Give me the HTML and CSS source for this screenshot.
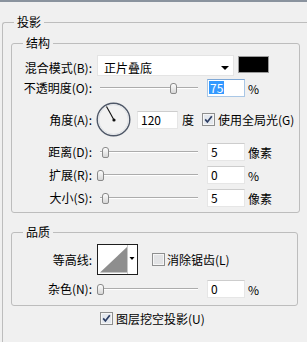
FILE: index.html
```html
<!DOCTYPE html>
<html lang="zh-CN">
<head>
    <meta charset="UTF-8">
    <title>投影</title>
    <link rel="stylesheet" href="styles.css">
</head>
<body>
    <fieldset class="group outer">
        <legend>投影</legend>

        <!-- 结构 -->
        <fieldset class="group struct">
            <legend>结构</legend>
            <div class="rows">
                <div class="row row-blend">
                    <span class="lbl">混合模式(B):</span>
                    <div class="select">正片叠底<span class="arrow"></span></div>
                    <div class="swatch"></div>
                </div>
                <div class="row row-opacity">
                    <span class="lbl">不透明度(O):</span>
                    <div class="slider"><div class="thumb" style="left: 73px;"></div></div>
                    <div class="field focus"><span class="sel">75</span></div>
                    <span class="unit">%</span>
                </div>
                <div class="row row-angle">
                    <span class="lbl">角度(A):</span>
                    <svg class="dial" width="35" height="35" viewBox="0 0 35 35">
                        <circle cx="17.5" cy="17.5" r="16.3" fill="#f2f2f2" stroke="#4f5868" stroke-width="1.4"/>
                        <circle cx="17.5" cy="17.5" r="14.8" fill="none" stroke="#dfe2e6" stroke-width="1"/>
                        <line x1="18" y1="18" x2="10.5" y2="4.5" stroke="#111" stroke-width="1.1"/>
                        <circle cx="18" cy="18" r="1.6" fill="#111"/>
                    </svg>
                    <div class="field wide">120</div>
                    <span class="deg">度</span>
                    <svg class="cb" width="13" height="13" viewBox="0 0 13 13">
                        <rect x="0.5" y="0.5" width="12" height="12" fill="#f6f6f6" stroke="#8e8f8f"/>
                        <rect x="2" y="2" width="9" height="9" fill="#e4e8ee"/>
                        <path d="M3.2 6.4 L5.4 9 L9.8 3.2" fill="none" stroke="#2c3d63" stroke-width="1.7"/>
                    </svg>
                    <span class="cb-text">使用全局光(G)</span>
                </div>
                <div class="row row-dist">
                    <span class="lbl">距离(D):</span>
                    <div class="slider"><div class="thumb" style="left: 5px;"></div></div>
                    <div class="field">5</div>
                    <span class="unit">像素</span>
                </div>
                <div class="row">
                    <span class="lbl">扩展(R):</span>
                    <div class="slider"><div class="thumb" style="left: 0px;"></div></div>
                    <div class="field">0</div>
                    <span class="unit">%</span>
                </div>
                <div class="row">
                    <span class="lbl">大小(S):</span>
                    <div class="slider"><div class="thumb" style="left: 5px;"></div></div>
                    <div class="field">5</div>
                    <span class="unit">像素</span>
                </div>
            </div>
        </fieldset>

        <!-- 品质 -->
        <fieldset class="group quality">
            <legend>品质</legend>
            <div class="rows">
                <div class="row row-contour">
                    <span class="lbl">等高线:</span>
                    <svg class="contour" width="41" height="31" viewBox="0 0 41 31">
                        <rect x="0.5" y="0.5" width="40" height="30" fill="#fff" stroke="#1e1e1e"/>
                        <polygon points="3,28.5 30,3 30,28.5" fill="#8e8e8e"/>
                        <line x1="30.5" y1="1" x2="30.5" y2="30" stroke="#c8c8c8"/>
                        <polygon points="32.5,13 37.5,13 35,16" fill="#000"/>
                    </svg>
                    <svg class="cb" width="13" height="13" viewBox="0 0 13 13">
                        <rect x="0.5" y="0.5" width="12" height="12" fill="#f6f6f6" stroke="#8e8f8f"/>
                        <rect x="2" y="2" width="9" height="9" fill="#e2e3e5"/>
                    </svg>
                    <span class="cb-text">消除锯齿(L)</span>
                </div>
                <div class="row">
                    <span class="lbl">杂色(N):</span>
                    <div class="slider"><div class="thumb" style="left: 0px;"></div></div>
                    <div class="field">0</div>
                    <span class="unit">%</span>
                </div>
            </div>
        </fieldset>

        <div class="knockout">
            <svg class="cb" width="13" height="13" viewBox="0 0 13 13">
                <rect x="0.5" y="0.5" width="12" height="12" fill="#f6f6f6" stroke="#8e8f8f"/>
                <rect x="2" y="2" width="9" height="9" fill="#e4e8ee"/>
                <path d="M3.2 6.4 L5.4 9 L9.8 3.2" fill="none" stroke="#2c3d63" stroke-width="1.7"/>
            </svg>
            <span class="cb-text">图层挖空投影(U)</span>
        </div>
    </fieldset>
</body>
</html>
```

FILE: styles.css
```css
html, body {
    margin: 0;
    overflow: hidden;
}
body {
    height: 340px;
    background-color: #f0f0f0;
    border-top: 2px solid #8a939e;
    font-family: "Noto Sans CJK SC", "Microsoft YaHei", sans-serif;
    font-size: 12px;
    color: #000;
}
.group {
    margin: 0;
    padding: 0;
    min-width: 0;
    box-sizing: border-box;
    border: 1px solid #bdbdbd;
    border-radius: 3px;
}
.group legend {
    margin-left: 11px;
    padding: 0 3px;
    line-height: 14px;
}
/* the outer group runs on past the right and bottom edges of the panel */
.outer {
    margin: 13px 0 0 2px;
    width: 305px;
    height: 327px;
    border-right: 0;
    border-bottom: 0;
    border-radius: 3px 0 0 0;
}
.struct {
    width: 289px;
    margin: 7px 0 0 8px;
}
.quality {
    width: 287px;
    margin: 12px 0 0 8px;
}
.rows {
    padding: 5px 0 5px 0;
}
.quality .rows {
    padding-bottom: 7px;
}
.row {
    display: flex;
    align-items: center;
    height: 18px;
}
.row + .row {
    margin-top: 5px;
}
.lbl {
    width: 80px;
    margin-right: 5px;
    text-align: right;
    white-space: nowrap;
    line-height: 16px;
}

/* blend mode row */
.row-blend {
    height: 21px;
    align-items: flex-start;
}
.row-blend .lbl {
    margin-top: 5px;
}
.select {
    position: relative;
    width: 137px;
    height: 21px;
    box-sizing: border-box;
    padding: 4px 0 0 6px;
    line-height: 16px;
    background-color: #fff;
    border: 1px solid #e4e4e4;
}
.select .arrow {
    position: absolute;
    right: 4px;
    top: 10px;
    border-left: 4px solid transparent;
    border-right: 4px solid transparent;
    border-top: 4px solid #000;
}
.swatch {
    width: 31px;
    height: 17px;
    box-sizing: border-box;
    margin: 1px 0 0 4px;
    background-color: #000;
    border: 1px solid #9a9a9a;
}

.row.row-opacity {
    margin-top: 3px;
}
.row.row-angle {
    height: 35px;
}
.row.row-dist {
    margin-top: 6px;
}

/* sliders */
.slider {
    position: relative;
    width: 102px;
    height: 18px;
    margin-right: 8px;
}
.slider::before {
    content: "";
    position: absolute;
    left: 3px;
    right: 1px;
    top: 8px;
    height: 1px;
    background-color: #acacac;
    border-bottom: 1px solid #fff;
}
.thumb {
    position: absolute;
    top: 4px;
    width: 5px;
    height: 9px;
    border: 1px solid #8a8a8a;
    border-radius: 3px 3px 2px 2px;
    background: linear-gradient(#fdfdfd, #d6d6d6);
}

/* text fields */
.field {
    width: 38px;
    height: 18px;
    box-sizing: border-box;
    padding-left: 3px;
    line-height: 16px;
    background-color: #fff;
    border: 1px solid #e6e6e6;
    border-top-color: #cdcdcd;
}
.field.focus {
    padding-left: 1px;
    border-color: #a9c7e6;
    border-top-color: #7fa8d6;
}
.field.wide {
    width: 41px;
}
.sel {
    display: inline-block;
    height: 13px;
    line-height: 13px;
    margin-top: 1px;
    padding: 0 1px;
    background-color: #3399ff;
    color: #fff;
    vertical-align: top;
}
.unit {
    margin-left: 3px;
}

/* angle row */
.dial {
    margin: 0 6px 0 -1px;
}
.deg {
    margin-left: 4px;
}
.row-angle .cb {
    margin-left: 8px;
}
.cb-text {
    margin-left: 3px;
    white-space: nowrap;
}

/* quality */
.row.row-contour {
    height: 31px;
}
.contour {
    margin-right: 14px;
}
.row-contour .cb-text {
    margin-left: 2px;
}

.knockout {
    display: flex;
    align-items: center;
    height: 16px;
    margin: 4px 0 0 97px;
}
```
